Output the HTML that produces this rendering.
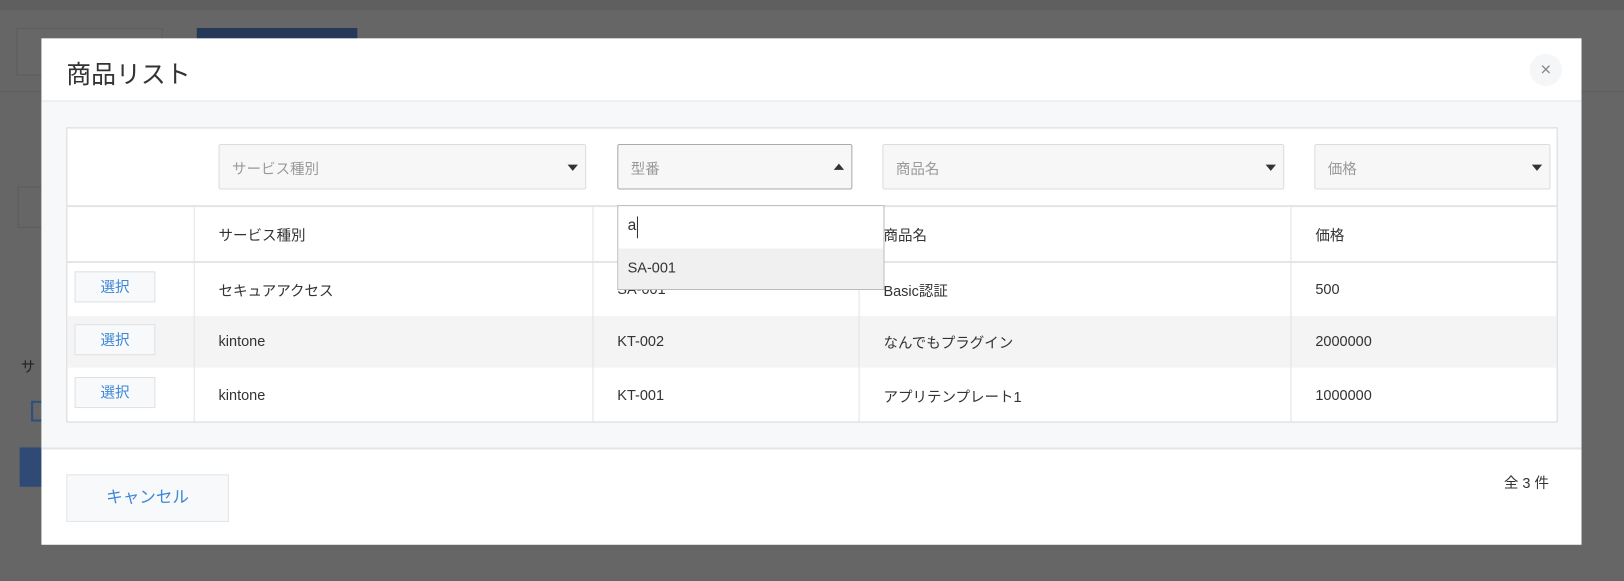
<!DOCTYPE html>
<html><head><meta charset="utf-8"><style>
*{box-sizing:border-box;margin:0;padding:0}
html,body{width:1624px;height:581px;overflow:hidden;background:#666}
#w{position:absolute;left:0;top:0;width:1568px;height:561px;transform:scale(1.0357);transform-origin:0 0;font-family:"Liberation Sans","Noto Sans CJK JP",sans-serif;color:#333}
.a{position:absolute}
.sel{position:absolute;top:139px;height:44px;background:#f7f7f7;border:1px solid #dcdcdc;border-radius:2px;font-size:14px;color:#999;padding:13px 12px}
.tri{position:absolute;right:7px;top:19px;width:0;height:0;border-left:5px solid transparent;border-right:5px solid transparent;border-top:6px solid #333}
.td{position:absolute;font-size:14px;color:#333}
.btn{position:absolute;left:72px;width:78px;height:30px;border:1px solid #dfe1e4;background:#f7f9fa;color:#3d86d8;font-size:14px;text-align:center;line-height:28px}
</style></head><body><div id="w">
<div class="a" style="left:0;top:0;width:1568px;height:10px;background:#5f5f5f"></div>
<div class="a" style="left:0;top:88px;width:1568px;height:1px;background:#5c5c5c"></div>
<div class="a" style="left:16px;top:27px;width:141px;height:46px;border:1px solid #5c5c5c;background:#676767"></div>
<div class="a" style="left:190px;top:27px;width:155px;height:12px;background:#253858"></div>
<div class="a" style="left:17px;top:180px;width:30px;height:40px;border:1px solid #5c5c5c"></div>
<div class="a" style="left:20px;top:344px;font-size:14px;color:#222">サ</div>
<div class="a" style="left:30px;top:387px;width:14px;height:20px;border:2px solid #2d4f7c;border-right:0"></div>
<div class="a" style="left:19px;top:432px;width:22px;height:38px;background:#2f4a75"></div>

<div class="a" style="left:40px;top:37px;width:1487px;height:489px;background:#fff">
  <div class="a" style="left:24px;top:15px;font-size:24px;color:#333">商品リスト</div>
  <div class="a" style="left:1437px;top:15px;width:31px;height:31px;border-radius:50%;background:#f5f6f7;color:#888;font-size:18px;text-align:center;line-height:30px">×</div>
  <div class="a" style="left:0;top:60px;width:1487px;height:337px;background:#f7f8fa;border-top:1px solid #e3e5e8;border-bottom:2px solid #e3e5e8"></div>
</div>

<div class="a" style="left:64px;top:123px;width:1440px;height:285px;background:#fff;border:1px solid #d8d8d8"></div>
<div class="a" style="left:65px;top:198px;width:1438px;height:2px;background:#e3e5e6"></div>
<div class="a" style="left:65px;top:252px;width:1438px;height:2px;background:#e3e5e6"></div>
<div class="a" style="left:65px;top:305px;width:1438px;height:50px;background:#f4f4f4"></div>
<div class="a" style="left:187px;top:200px;width:1px;height:207px;background:#e3e3e3"></div>
<div class="a" style="left:572px;top:200px;width:1px;height:207px;background:#e3e3e3"></div>
<div class="a" style="left:829px;top:200px;width:1px;height:207px;background:#e3e3e3"></div>
<div class="a" style="left:1246px;top:200px;width:1px;height:207px;background:#e3e3e3"></div>

<div class="sel" style="left:211px;width:355px">サービス種別<div class="tri"></div></div>
<div class="sel" style="left:596px;width:227px;border-color:#aaa">型番<div class="tri" style="border-top:0;border-bottom:6px solid #333;top:18px"></div></div>
<div class="sel" style="left:852px;width:388px">商品名<div class="tri"></div></div>
<div class="sel" style="left:1269px;width:228px">価格<div class="tri"></div></div>

<div class="td" style="left:211px;top:217px">サービス種別</div>
<div class="td" style="left:853px;top:217px">商品名</div>
<div class="td" style="left:1270px;top:217px">価格</div>

<div class="btn" style="top:262px">選択</div>
<div class="td" style="left:211px;top:271px">セキュアアクセス</div>
<div class="td" style="left:596px;top:271px">SA-001</div>
<div class="td" style="left:853px;top:271px">Basic認証</div>
<div class="td" style="left:1270px;top:271px">500</div>

<div class="btn" style="top:313px">選択</div>
<div class="td" style="left:211px;top:321px">kintone</div>
<div class="td" style="left:596px;top:321px">KT-002</div>
<div class="td" style="left:853px;top:321px">なんでもプラグイン</div>
<div class="td" style="left:1270px;top:321px">2000000</div>

<div class="btn" style="top:364px">選択</div>
<div class="td" style="left:211px;top:373px">kintone</div>
<div class="td" style="left:596px;top:373px">KT-001</div>
<div class="td" style="left:853px;top:373px">アプリテンプレート1</div>
<div class="td" style="left:1270px;top:373px">1000000</div>

<div class="a" style="left:596px;top:198px;width:258px;height:82px;background:#fff;border:1px solid #bbb">
  <div class="a" style="left:9px;top:10px;font-size:15px;color:#333">a</div>
  <div class="a" style="left:18px;top:10px;width:1px;height:21px;background:#333"></div>
  <div class="a" style="left:0;top:41px;width:256px;height:39px;background:#f0f0f0"></div>
  <div class="a" style="left:9px;top:51px;font-size:14px;color:#333">SA-001</div>
</div>

<div class="a" style="left:64px;top:458px;width:157px;height:46px;border:1px solid #e3e5e8;background:#f7f9fa;color:#3d86d8;font-size:16px;text-align:center;line-height:44px">キャンセル</div>
<div class="a" style="left:1452px;top:456px;font-size:14px;color:#333">全 3 件</div>
</div></body></html>
